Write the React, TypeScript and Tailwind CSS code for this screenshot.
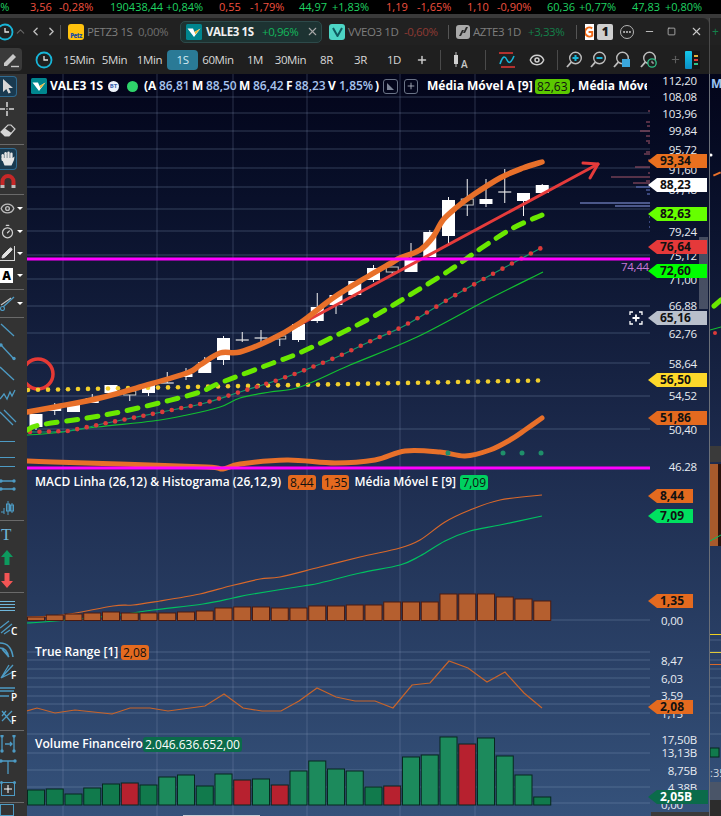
import React from "react";
import { ChevronLeft, ChevronRight, ChevronUp, Ellipsis, Eye, Minus, Pencil, Plus, Square, Timer, X } from "lucide-react";

type P = [number, number];

function smooth(pts: P[]): string {
  let d = `M${pts[0][0]} ${pts[0][1]}`;
  for (let i = 0; i < pts.length - 1; i++) {
    const p0 = pts[Math.max(0, i - 1)];
    const p1 = pts[i];
    const p2 = pts[i + 1];
    const p3 = pts[Math.min(pts.length - 1, i + 2)];
    const c1x = p1[0] + (p2[0] - p0[0]) / 6;
    const c1y = p1[1] + (p2[1] - p0[1]) / 6;
    const c2x = p2[0] - (p3[0] - p1[0]) / 6;
    const c2y = p2[1] - (p3[1] - p1[1]) / 6;
    d += ` C${c1x.toFixed(1)} ${c1y.toFixed(1)} ${c2x.toFixed(1)} ${c2y.toFixed(1)} ${p2[0]} ${p2[1]}`;
  }
  return d;
}

function interp(pts: P[], x: number): number {
  for (let i = 0; i < pts.length - 1; i++) {
    if (x >= pts[i][0] && x <= pts[i + 1][0]) {
      const t = (x - pts[i][0]) / (pts[i + 1][0] - pts[i][0]);
      return pts[i][1] + t * (pts[i + 1][1] - pts[i][1]);
    }
  }
  return pts[pts.length - 1][1];
}

const gridY = [97, 113, 131, 149, 168, 187, 209, 231, 255, 279, 306, 333, 363, 396, 429, 620, 652, 660, 669, 678, 687, 696, 704, 713, 734, 753, 770, 787, 803];
const gridX = [63, 157, 233, 307, 400, 475];

// [index, bodyTop, bodyBottom, wickTop, wickBottom, kind]
type C = [number, number, number, number, number, "w" | "h" | "x"];
const candles: C[] = [
  [0, 414, 427, 414, 430, "w"], [1, 408, 411, 403, 415, "w"], [2, 403, 412, 403, 412, "w"], [3, 398, 403, 394, 403, "w"],
  [4, 385, 393, 385, 397, "w"], [5, 391, 395, 391, 401, "h"], [6, 385, 393, 385, 396, "w"], [7, 383, 383, 372, 383, "x"],
  [8, 374, 377, 368, 380, "w"], [9, 362, 373, 357, 373, "w"], [10, 338, 360, 336, 365, "w"], [11, 340, 340, 332, 342, "x"],
  [12, 338, 338, 330, 342, "x"], [13, 336, 339, 336, 346, "h"], [14, 324, 340, 322, 342, "w"], [15, 307, 321, 293, 323, "w"],
  [16, 295, 305, 295, 314, "w"], [17, 281, 295, 281, 297, "w"], [18, 268, 280, 265, 282, "w"], [19, 267, 272, 267, 275, "h"],
  [20, 258, 272, 243, 272, "w"], [21, 232, 257, 230, 257, "w"], [22, 200, 236, 197, 243, "w"], [23, 199, 205, 179, 216, "h"],
  [24, 199, 204, 179, 207, "w"], [25, 192, 192, 169, 203, "x"], [26, 193, 201, 193, 216, "w"], [27, 185, 193, 184, 193, "w"],
];

const orangeMA: P[] = [[27, 412], [60, 406], [100, 398], [140, 387], [187, 373], [200, 365], [220, 353], [240, 352], [270, 340], [300, 323], [333, 298], [367, 277], [393, 262], [400, 258], [420, 250], [433, 237], [443, 220], [457, 207], [473, 195], [500, 178], [523, 168], [542, 162]];
const limeMA: P[] = [[27, 430], [40, 425], [87, 418], [120, 412], [163, 402], [200, 392], [220, 383], [273, 363], [297, 354], [333, 337], [367, 320], [400, 301], [450, 270], [483, 247], [513, 228], [542, 215]];
const dotMA: P[] = [[27, 432], [68, 431], [107, 423], [157, 413], [205, 403], [243, 391], [272, 382], [300, 372], [337, 357], [373, 340], [400, 328], [418, 318], [452, 297], [487, 277], [513, 263], [541, 248]];
const thinGreen: P[] = [[27, 435], [53, 433], [97, 427], [153, 421], [187, 415], [220, 407], [240, 398], [270, 392], [300, 387], [350, 365], [417, 337], [487, 300], [543, 272]];
const lowOrange: P[] = [[27, 461], [53, 462], [120, 464], [207, 467], [223, 469], [240, 464], [287, 460], [335, 463], [375, 460], [405, 451], [440, 452], [465, 456], [490, 450], [510, 440], [525, 430], [542, 418]];
const macdA: P[] = [[27, 617], [63, 615], [113, 606], [133, 605], [160, 601], [200, 594], [230, 586], [260, 579], [280, 577], [320, 567], [360, 557], [400, 548], [420, 540], [445, 522], [470, 510], [500, 500], [542, 495]];
const macdB: P[] = [[27, 623], [43, 622], [87, 618], [120, 615], [153, 610], [203, 604], [233, 598], [253, 594], [303, 586], [320, 583], [360, 573], [400, 565], [420, 556], [445, 541], [470, 531], [500, 525], [542, 516]];
const trueRange: P[] = [[27, 711], [37, 708], [55, 713], [75, 710], [112, 714], [130, 708], [150, 708], [168, 711], [205, 706], [224, 694], [243, 708], [262, 711], [281, 711], [299, 701], [317, 688], [336, 697], [355, 701], [375, 701], [393, 708], [412, 685], [430, 683], [449, 661], [468, 668], [487, 682], [505, 672], [524, 693], [542, 708]];

const macdTops = [617, 615, 614, 613, 612, 613, 613, 613, 612, 611, 608, 607, 607, 608, 608, 606, 606, 605, 605, 602, 602, 602, 594, 594, 594, 597, 599, 601];
const volTops = [790, 789, 794, 788, 784, 783, 785, 777, 775, 786, 774, 780, 779, 785, 771, 761, 769, 771, 787, 786, 757, 755, 737, 744, 738, 756, 775, 797];
const volRed = new Set([5, 11, 13, 19, 23]);

const profile: [number, number, string][] = [
  [111, 2, "#a5566a"], [122, 4, "#a5566a"], [126, 3, "#a5566a"], [131, 10, "#a5566a"], [136, 4, "#a5566a"], [141, 4, "#a5566a"], [143, 2, "#a5566a"],
  [152, 4, "#a5566a"], [154, 6, "#a5566a"], [160, 2, "#a5566a"], [167, 15, "#a5566a"], [173, 2, "#a5566a"], [177, 39, "#a5566a"], [181, 4, "#a5566a"],
  [183, 17, "#a5566a"], [187, 14, "#6a7fd0"], [190, 4, "#6a7fd0"], [194, 3, "#6a7fd0"], [203, 70, "#8ea0ea"], [206, 35, "#8ea0ea"], [217, 1, "#6a7fd0"], [222, 1, "#6a7fd0"], [227, 1, "#6a7fd0"],
];

const axis: [number, string, number][] = [
  [81, "112,20", 0], [97, "108,08", 0], [114, "103,96", 0], [131, "99,84", 0], [150, "95,72", 0], [170, "91,60", 0], [190, "87,48", 0], [211, "83,36", 0],
  [232, "79,24", 0], [256, "75,12", 0], [280, "71,00", 0], [306, "66,88", 0], [334, "62,76", 0], [364, "58,64", 0], [396, "54,52", 0], [430, "50,40", 0], [467, "46.28", 0],
  [621, "0,00", 14], [661, "8,47", 14], [679, "6,03", 14], [696, "3,59", 14], [714, "1,15", 14],
  [740, "17,50B", 0], [753, "13,13B", 0], [771, "8,75B", 0], [788, "4,38B", 0], [805, "0,00", 14],
];

const tags: [number, string, string, string, number][] = [
  [161, "93,34", "#e8701f", "#111", 59], [185, "88,23", "#ffffff", "#111", 59], [214, "82,63", "#66ff00", "#111", 59], [247, "76,64", "#e5393a", "#111", 59],
  [271, "72,60", "#00ff00", "#111", 59], [318, "65,16", "#b9c0cb", "#111", 59], [380, "56,50", "#fdd82a", "#111", 59], [418, "51,86", "#e46a1f", "#111", 59],
  [496, "8,44", "#e46a1f", "#111", 45], [516, "7,09", "#00e060", "#111", 45], [601, "1,35", "#e46a1f", "#111", 45], [707, "2,08", "#e46a1f", "#111", 45], [797, "2,05B", "#0b6b4a", "#fff", 60],
];

function ValeLogo({ s = 16 }: { s?: number }) {
  return (
    <svg width={s} height={s} viewBox="0 0 16 16" className="flex-none">
      <rect width="16" height="16" rx="1.5" fill="#00868f" />
      <path d="M1.5 4.5 H7 L8.5 8 L14.5 4.5 L8 13 Z" fill="#fff" />
      <path d="M8.5 8 L14.5 4.5 L9.5 10.5 Z" fill="#e8b93a" />
    </svg>
  );
}

function Chart() {
  const dots: number[] = [];
  for (let x = 30; x <= 541; x += 9.45) dots.push(x);
  const yellow: number[] = [];
  for (let x = 28; x <= 538; x += 10) yellow.push(x);
  return (
    <svg viewBox="27 74 682 742" className="absolute inset-0 w-full h-full">
      {gridY.map((y) => <line key={y} x1="27" x2="650" y1={y} y2={y} stroke="#8fa3c4" strokeOpacity="0.33" strokeWidth="1" />)}
      {gridX.map((x) => <line key={x} x1={x} x2={x} y1="74" y2="816" stroke="#8fa3c4" strokeOpacity="0.28" strokeWidth="1" />)}
      {profile.map(([y, w, c]) => <line key={y} x1={650 - w} x2="650" y1={y} y2={y} stroke={c} strokeWidth="1" />)}
      <circle cx="38" cy="374" r="15" fill="none" stroke="#e53935" strokeWidth="3.5" />
      {candles.map(([i, t, b, wt, wb, k]) => {
        const cx = 36 + 18.75 * i;
        return (
          <g key={i}>
            <line x1={cx} x2={cx} y1={wt} y2={wb} stroke="#f4f4f4" strokeWidth="1" />
            {k === "w" && <rect x={cx - 6.5} y={t} width="13" height={b - t} fill="#fff" />}
            {k === "h" && <rect x={cx - 6} y={t} width="12" height={b - t} fill="#10121c" stroke="#c9c9c9" strokeWidth="1" />}
            {k === "x" && <line x1={cx - 6.5} x2={cx + 6.5} y1={t} y2={t} stroke="#e8e8e8" strokeWidth="1.2" />}
          </g>
        );
      })}
      {yellow.map((x) => <circle key={x} cx={x} cy={390 - ((x - 28) / 510) * 9.5} r="2.3" fill="#f2cf2c" />)}
      <path d={smooth(thinGreen)} fill="none" stroke="#12c030" strokeWidth="1.2" />
      <path d={smooth(dotMA)} fill="none" stroke="#119a6a" strokeWidth="1.2" />
      {dots.map((x) => <circle key={x} cx={x} cy={interp(dotMA, x)} r="2.3" fill="#dc3a3a" />)}
      <path d={smooth(limeMA)} fill="none" stroke="#6ae800" strokeWidth="5" strokeLinecap="round" strokeDasharray="11 9.5" />
      <path d={smooth(lowOrange)} fill="none" stroke="#e8702a" strokeWidth="5" strokeLinecap="round" />
      {[448, 503, 522, 541].map((x) => <circle key={x} cx={x} cy="453" r="2.5" fill="#1f8f6a" />)}
      <g stroke="#e53b3b" strokeWidth="3" fill="none" strokeLinecap="round" strokeLinejoin="round">
        <line x1="299" y1="325" x2="598" y2="164" />
        <path d="M583 163 L598 164 L590 178" />
      </g>
      <path d={smooth(orangeMA)} fill="none" stroke="#e8702a" strokeWidth="5.5" strokeLinecap="round" />
      <rect x="27" y="257.5" width="623" height="3" fill="#ff00ff" />
      <rect x="27" y="466.5" width="623" height="3" fill="#ff00ff" />
      <path d={smooth(macdA)} fill="none" stroke="#d8682a" strokeWidth="1.2" />
      <path d={smooth(macdB)} fill="none" stroke="#00c060" strokeWidth="1.2" />
      {macdTops.map((t, i) => (
        <rect key={i} x={27.5 + 18.75 * i} y={t} width="17" height={620.5 - t} fill="#b55f2f" stroke="#4a1a10" strokeWidth="1" />
      ))}
      <path d={trueRange.map((p, i) => `${i ? "L" : "M"}${p[0]} ${p[1]}`).join(" ")} fill="none" stroke="#c8642a" strokeWidth="1.2" />
      {volTops.map((t, i) => (
        <rect
          key={i}
          x={27.5 + 18.75 * i}
          y={t}
          width="17"
          height={805 - t}
          fill={volRed.has(i) ? "#b7212f" : t < 780 ? "#1c8a5c" : "#117a4c"}
          stroke="#07271f"
          strokeWidth="1"
        />
      ))}
      <rect x="183" y="815" width="77" height="1" fill="#c8ccd4" />
      <rect x="651" y="812" width="58" height="4" fill="#3a3a3a" />
    </svg>
  );
}

function Badge({ bg, fg = "#111", children }: { bg: string; fg?: string; children: React.ReactNode }) {
  return (
    <span className="flex-none rounded-[3px] px-[2px] h-[15px] leading-[15px] font-normal" style={{ backgroundColor: bg, color: fg }}>
      {children}
    </span>
  );
}

function Legends() {
  return (
    <>
      <div className="absolute left-[4px] top-[3px] w-[616px] h-[18px] overflow-hidden flex items-center whitespace-nowrap text-[12px] font-semibold text-white">
        <ValeLogo />
        <span className="w-[51px] ml-[3px] flex-none font-bold">VALE3 1S</span>
        <span className="flex-none ml-[7px] w-[11px] h-[11px] rounded-full bg-[#eef3fb] text-[#3a62b0] text-[6px] leading-[11px] text-center font-bold">BT</span>
        <span className="flex-none ml-[8px] w-[11px] h-[11px] rounded-full bg-[#2fd36b]" />
        <span className="flex-none ml-[6px] w-[15px] font-bold">(A</span>
        <span className="flex-none w-[33px] text-[#a8c4ee]">86,81</span>
        <span className="flex-none w-[14px] font-bold">M</span>
        <span className="flex-none w-[33px] text-[#a8c4ee]">88,50</span>
        <span className="flex-none w-[14px] font-bold">M</span>
        <span className="flex-none w-[33px] text-[#a8c4ee]">86,42</span>
        <span className="flex-none w-[9px] font-bold">F</span>
        <span className="flex-none w-[33px] text-[#a8c4ee]">88,23</span>
        <span className="flex-none w-[11px] font-bold">V</span>
        <span className="flex-none w-[36px] text-[#a8c4ee]">1,85%</span>
        <span className="flex-none w-[8px] font-bold">)</span>
        <span className="flex-none w-[15px] h-[15px] rounded-[3px] border border-[#6a7386] flex items-center justify-center">
          <svg width="9" height="9" viewBox="0 0 9 9"><path d="M1 1 V8 H8 Z" fill="#7c8496" /></svg>
        </span>
        <span className="flex-none ml-[6px] w-[14px] h-[15px] rounded-[3px] border border-[#6a7386] flex items-center justify-center">
          <Plus size={10} color="#b7bdc9" />
        </span>
        <span className="flex-none ml-[9px] w-[108px] font-bold">Média Móvel A [9]</span>
        <Badge bg="#5bc800">82,63</Badge>
        <span className="flex-none ml-[2px] font-bold">, Média Móvel E [9]</span>
      </div>
      <div className="absolute left-[8px] top-[400px] h-[16px] flex items-center whitespace-nowrap text-[12px] font-semibold text-white">
        <span className="w-[253px] flex-none">MACD Linha (26,12) &amp; Histograma (26,12,9)</span>
        <Badge bg="#e46a1f">8,44</Badge>
        <span className="ml-[6px] flex-none flex"><Badge bg="#e46a1f">1,35</Badge></span>
        <span className="ml-[5px] w-[106px] flex-none">Média Móvel E [9]</span>
        <Badge bg="#00d060">7,09</Badge>
      </div>
      <div className="absolute left-[8px] top-[570px] h-[16px] flex items-center whitespace-nowrap text-[12px] font-semibold text-white">
        <span className="w-[86px] flex-none">True Range [1]</span>
        <Badge bg="#e46a1f">2,08</Badge>
      </div>
      <div className="absolute left-[8px] top-[662px] h-[16px] flex items-center whitespace-nowrap text-[12px] font-semibold text-white">
        <span className="w-[108px] flex-none">Volume Financeiro</span>
        <Badge bg="#0b6b4a" fg="#fff">2.046.636.652,00</Badge>
      </div>
    </>
  );
}

function PriceAxis() {
  return (
    <>
      {axis.map(([y, t, r]) => (
        <span
          key={y}
          className="absolute w-[50px] text-right text-[11.5px] tracking-[-0.2px] leading-[14px] text-[#e8ecf2]"
          style={{ top: y - 81, left: 620 - r }}
        >
          {t}
        </span>
      ))}
      <span className="absolute left-[594px] top-[186px] text-[11.5px] tracking-[-0.3px] leading-[14px] text-[#c878d8]">74,44</span>
      <div className="absolute left-[672px] top-[163px] w-[9px] h-[72px] bg-[#9aa0a8]/40 flex items-center justify-center text-[#e0e0e0] text-[11px]">‹</div>
      {tags.map(([y, t, bg, fg, w]) => (
        <span
          key={t}
          className="absolute left-[621px] h-[14px] pl-[12px] text-[12px] leading-[14px] font-bold [clip-path:polygon(9px_0,100%_0,100%_100%,9px_100%,0_50%)]"
          style={{ top: y - 81, width: w, backgroundColor: bg, color: fg }}
        >
          {t}
        </span>
      ))}
      <div className="absolute left-[602px] top-[237px] w-[14px] h-[14px] flex items-center justify-center">
        <svg width="14" height="14" viewBox="0 0 14 14" fill="none" stroke="#fff" strokeWidth="1.3">
          <path d="M1 4 V1 H4 M10 1 H13 V4 M13 10 V13 H10 M4 13 H1 V10" />
          <path d="M7 3.5 V10.5 M3.5 7 H10.5" strokeWidth="1.8" />
        </svg>
      </div>
    </>
  );
}

function Caret() {
  return <span className="flex-none ml-[2px] w-0 h-0 border-l-[3px] border-r-[3px] border-t-[3px] border-l-transparent border-r-transparent border-t-white" />;
}

function Divider({ h }: { h: string }) {
  return (
    <div className={`flex items-center flex-none ${h}`}>
      <div className="w-[24px] h-px bg-[#6a6a6a]" />
    </div>
  );
}

const B = "#4d9bc4";

function Line({ pts, dots }: { pts: string; dots?: [number, number][] }) {
  return (
    <svg width="18" height="18" viewBox="0 0 18 18" fill="none" stroke={B} strokeWidth="1.3" className="flex-none">
      <path d={pts} />
      {dots && dots.map((d, i) => <circle key={i} cx={d[0]} cy={d[1]} r="1.7" fill={B} stroke="none" />)}
    </svg>
  );
}

function Row({ h, children }: { h: string; children: React.ReactNode }) {
  return <div className={`flex items-center flex-none ${h}`}>{children}</div>;
}

function Letter({ c }: { c: string }) {
  return <span className="flex-none -ml-[7px] text-[10px] leading-[10px] mt-[6px] text-white font-semibold">{c}</span>;
}

function LeftTools() {
  return (
    <div className="w-[27px] flex-none bg-[#333333] flex flex-col overflow-hidden">
      <Row h="h-[24px]">
        <div className="w-[17px] h-[21px] rounded-r-[4px] bg-[#1a3a50] border border-l-0 border-[#2f6a90] flex items-center justify-center">
          <svg width="12" height="15" viewBox="0 0 12 15"><path d="M1 0 V13 L4.3 10 L6.5 14.5 L8.8 13.5 L6.5 9 H11 Z" fill="#d7d7d7" /></svg>
        </div>
      </Row>
      <Row h="h-[22px]">
        <svg width="18" height="18" viewBox="0 0 18 18" fill="none" stroke="#d9d9d9" strokeWidth="1.5" className="flex-none -ml-[2px]">
          <path d="M9 2 V7 M9 11 V16 M2 9 H7 M11 9 H16" />
          <circle cx="9" cy="9" r="0.8" fill="#d9d9d9" stroke="none" />
        </svg>
      </Row>
      <Row h="h-[22px]">
        <svg width="16" height="14" viewBox="0 0 16 14" className="flex-none">
          <path d="M1 8 L8 1 H11 L15 5 L9 12 H5 Z" fill="none" stroke="#cfcfcf" strokeWidth="1.2" />
          <path d="M1 8 L5 12 H9 L11.5 9 L5 4.5 Z" fill="#d6d6d6" />
        </svg>
      </Row>
      <Divider h="h-[5px]" />
      <Row h="h-[23px]">
        <div className="w-[17px] h-[22px] rounded-r-[4px] bg-[#1a3a50] border border-l-0 border-[#2f6a90] flex items-center justify-center">
          <svg width="14" height="15" viewBox="0 0 14 15" fill="#e6e6e6">
            <rect x="0.5" y="3" width="2.4" height="7" rx="1.2" />
            <rect x="3.4" y="1" width="2.4" height="8" rx="1.2" />
            <rect x="6.3" y="0.5" width="2.4" height="8" rx="1.2" />
            <rect x="9.2" y="1.5" width="2.4" height="7" rx="1.2" />
            <path d="M0.5 7 H11.6 L13.5 5.5 L13 9 L10.5 14.5 H3.5 Z" />
          </svg>
        </div>
      </Row>
      <Row h="h-[22px]">
        <svg width="16" height="15" viewBox="0 0 16 15" fill="none" className="flex-none">
          <path d="M2.5 11 V7.5 A5.5 5.5 0 0 1 13.5 7.5 V11" stroke="#c62828" strokeWidth="4" />
          <path d="M2.5 11 V14 M13.5 11 V14" stroke="#bdbdbd" strokeWidth="4" />
        </svg>
      </Row>
      <Divider h="h-[4px]" />
      <Row h="h-[24px]">
        <Eye size={15} color="#bdbdbd" strokeWidth={2.2} className="flex-none" />
        <Caret />
      </Row>
      <Row h="h-[22px]">
        <Timer size={15} color="#d0d0d0" strokeWidth={2} className="flex-none" />
        <Caret />
      </Row>
      <Row h="h-[22px]">
        <div className="flex-none w-[15px] h-[15px] border-b border-r border-[#d6d6d6] flex items-center justify-center">
          <Pencil size={12} color="#e2e2e2" fill="#e2e2e2" />
        </div>
        <Caret />
      </Row>
      <Row h="h-[23px]">
        <div className="flex-none w-[13px] h-[15px] bg-white text-black text-[12px] leading-[15px] font-extrabold text-center">A</div>
        <span className="ml-[2px] flex"><Caret /></span>
      </Row>
      <Divider h="h-[4px]" />
      <Row h="h-[24px]">
        <svg width="15" height="15" viewBox="0 0 15 15" fill="none" className="flex-none">
          <path d="M14 1 L3 11" stroke={B} strokeWidth="1.3" />
          <path d="M11 2 L1 9" stroke="#c7c7c7" strokeWidth="1.1" />
          <circle cx="2.5" cy="12.5" r="2" stroke={B} strokeWidth="1.1" />
        </svg>
        <Caret />
      </Row>
      <Divider h="h-[4px]" />
      <Row h="h-[22px]"><Line pts="M1 3 L14 15" /></Row>
      <Row h="h-[21px]"><Line pts="M1 2 L14 16" dots={[[1, 2], [14, 15.5]]} /></Row>
      <Row h="h-[22px]"><Line pts="M0 3 L14 16" /></Row>
      <Row h="h-[22px]"><Line pts="M0 13 L4 8 L7 13 L10 6 L12 10 L15 4" /></Row>
      <Row h="h-[24px]"><Line pts="M0 3 L13 16 M4 1 L16 13" /></Row>
      <Row h="h-[22px]"><div className="w-[15px] h-px bg-[#4d9bc4]" /></Row>
      <Row h="h-[20px]">
        <div className="flex flex-col gap-[8px]">
          <div className="w-[15px] h-px bg-[#4d9bc4]" />
          <div className="w-[15px] h-px bg-[#4d9bc4]" />
        </div>
      </Row>
      <Row h="h-[25px]"><Line pts="M0 5 H15 M0 13 H15" dots={[[1, 5], [14, 5], [1, 13], [14, 13]]} /></Row>
      <Row h="h-[21px]">
        <svg width="16" height="16" viewBox="0 0 16 16" fill="none" stroke={B} className="flex-none">
          <path d="M1 12 H4 M4 8 V14 M8 1 V15 M12 3 V13" />
          <rect x="6.5" y="4" width="3" height="7" />
          <rect x="10.5" y="5" width="3" height="6" />
        </svg>
      </Row>
      <Divider h="h-[4px]" />
      <Row h="h-[24px]"><span className="flex-none ml-[1px] text-[17px] leading-[17px] text-[#6fb6da] font-['Liberation_Serif',serif]">T</span></Row>
      <Row h="h-[23px]">
        <svg width="12" height="15" viewBox="0 0 12 15" className="flex-none ml-[1px]"><path d="M6 0 L12 7 H8.5 V15 H3.5 V7 H0 Z" fill="#0d9a5e" /></svg>
      </Row>
      <Row h="h-[22px]">
        <svg width="12" height="15" viewBox="0 0 12 15" className="flex-none ml-[1px]"><path d="M6 15 L12 8 H8.5 V0 H3.5 V8 H0 Z" fill="#f25555" /></svg>
      </Row>
      <Divider h="h-[3px]" />
      <Row h="h-[23px]">
        <div className="flex flex-col gap-[2px]">
          <div className="w-[15px] h-px bg-[#6fb6da]" />
          <div className="w-[15px] h-px bg-[#6fb6da]" />
          <div className="w-[15px] h-px bg-[#6fb6da]" />
          <div className="w-[15px] h-px bg-[#6fb6da]" />
        </div>
      </Row>
      <Row h="h-[21px]"><Line pts="M0 9 L9 2 M1 14 L12 5 M4 15 L10 11" /><Letter c="C" /></Row>
      <Row h="h-[23px]">
        <svg width="16" height="16" viewBox="0 0 16 16" fill="none" stroke={B} strokeWidth="1.6" className="flex-none -ml-[1px]">
          <path d="M1 1 Q12 1 14 15 M1 6 Q8 6 9.5 15 M10 15 L3 7" />
        </svg>
      </Row>
      <Row h="h-[22px]"><Line pts="M1 15 L13 2 M1 15 L9 2 M1 15 L15 8" /><Letter c="F" /></Row>
      <Row h="h-[22px]"><Line pts="M0 3 H15 M0 6 H14 M0 11 H9" /><Letter c="P" /></Row>
      <Row h="h-[23px]"><Line pts="M2 3 L11 14 M2 13 L12 3 M6 3 L2 8" /><Letter c="F" /></Row>
      <Divider h="h-[4px]" />
      <Row h="h-[24px]"><Line pts="M2 1 V16 M14 1 V16 M5 9 H12 M10 7 L12 9 L10 11" dots={[[2, 1], [2, 16], [14, 1], [14, 16]]} /></Row>
      <Row h="h-[21px]"><Line pts="M1 3 H15 M8 3 V16" dots={[[1, 3], [15, 3]]} /></Row>
      <Row h="h-[23px]">
        <svg width="17" height="17" viewBox="0 0 17 17" fill="none" stroke={B} className="flex-none">
          <rect x="1.5" y="2.5" width="13" height="13" />
          <path d="M8 5 V13 M4 9 H12" stroke="#fff" />
          <circle cx="1.5" cy="2.5" r="1.5" fill={B} stroke="none" />
          <circle cx="14.5" cy="2.5" r="1.5" fill={B} stroke="none" />
        </svg>
      </Row>
      <Divider h="h-[4px]" />
      <Row h="h-[12px]"><div className="w-[14px] h-[12px] border border-[#4d9bc4]" /></Row>
    </div>
  );
}

function Ticker() {
  const g = "text-[#1fd262]";
  const r = "text-[#f0503f]";
  return (
    <div className="h-[14px] flex-none bg-black flex items-center overflow-hidden whitespace-nowrap text-[11px] leading-[14px]">
      <span className={`flex-none w-[13px] -ml-[6px] ${g}`}>1%</span>
      <span className={`flex-none ml-[23px] w-[29px] ${r}`}>3,56</span>
      <span className={`flex-none w-[51px] ${r}`}>-0,28%</span>
      <span className={`flex-none w-[56px] ${g}`}>190438,44</span>
      <span className={`flex-none w-[53px] ${g}`}>+0,84%</span>
      <span className={`flex-none w-[31px] ${r}`}>0,55</span>
      <span className={`flex-none w-[49px] ${r}`}>-1,79%</span>
      <span className={`flex-none w-[33px] ${g}`}>44,97</span>
      <span className={`flex-none w-[54px] ${g}`}>+1,83%</span>
      <span className={`flex-none w-[31px] ${r}`}>1,19</span>
      <span className={`flex-none w-[50px] ${r}`}>-1,65%</span>
      <span className={`flex-none w-[30px] ${r}`}>1,10</span>
      <span className={`flex-none w-[50px] ${r}`}>-0,90%</span>
      <span className={`flex-none w-[32px] ${g}`}>60,36</span>
      <span className={`flex-none w-[53px] ${g}`}>+0,77%</span>
      <span className={`flex-none w-[33px] ${g}`}>47,83</span>
      <span className={`flex-none w-[37px] ${g}`}>+0,80%</span>
    </div>
  );
}

function Tabs() {
  return (
    <div className="h-[27px] flex-none flex bg-[#3a3a3a]">
      <div className="w-[709px] flex-none bg-[#212121] flex items-center rounded-tr-[6px] whitespace-nowrap text-[11.5px] tracking-[-0.4px]">
        <div className="flex-none w-[14px] h-[18px] overflow-hidden">
          <svg width="14" height="18" viewBox="0 0 14 18" fill="none">
            <circle cx="5" cy="9" r="7.5" stroke="#18b5d8" strokeWidth="1.8" />
            <path d="M5 5 V9 H9" stroke="#e6e6e6" strokeWidth="1.3" />
          </svg>
        </div>
        <ChevronUp size={13} color="#666" className="flex-none" />
        <ChevronLeft size={13} color="#bcbcbc" strokeWidth={2.6} className="flex-none ml-[2px]" />
        <ChevronRight size={13} color="#bcbcbc" strokeWidth={2.6} className="flex-none ml-[3px]" />
        <div className="flex-none ml-[2px] w-px h-[14px] bg-[#555]" />
        <div className="flex-none ml-[7px] w-[16px] h-[16px] rounded-[3px] bg-[#ffc20e] flex items-end justify-center overflow-hidden">
          <span className="text-[6px] leading-[8px] font-extrabold text-[#1e4fa0]">Petz</span>
        </div>
        <span className="flex-none ml-[3px] w-[51px] text-[#7e7e7e]">PETZ3 1S</span>
        <span className="flex-none w-[42px] text-[#6f6f6f]">0,00%</span>
        <div className="flex-none w-[142px] h-[22px] rounded-[5px] bg-[#1d3332] border border-[#2d4a4a] flex items-center">
          <span className="ml-[5px] flex"><ValeLogo /></span>
          <span className="flex-none ml-[4px] w-[56px] text-[#f0f0f0] font-bold">VALE3 1S</span>
          <span className="flex-none w-[44px] text-[#14b85c]">+0,96%</span>
          <X size={13} color="#a8a8a8" strokeWidth={2} className="flex-none" />
        </div>
        <div className="flex-none ml-[7px] w-[16px] h-[16px] rounded-[3px] bg-[#4dd5c5] flex items-center justify-center">
          <svg width="11" height="10" viewBox="0 0 11 10" fill="none"><path d="M1 1 L5.5 9 L10 1" stroke="#0e5c60" strokeWidth="2" /></svg>
        </div>
        <span className="flex-none ml-[3px] w-[56px] text-[#7e7e7e]">VVEO3 1D</span>
        <span className="flex-none w-[44px] text-[#8e3a33]">-0,60%</span>
        <div className="flex-none w-px h-[14px] bg-[#555]" />
        <div className="flex-none ml-[7px] w-[14px] h-[14px] rounded-[3px] bg-[#a9a9a9] flex items-center justify-center">
          <svg width="11" height="9" viewBox="0 0 11 9" fill="#2a2a2a"><path d="M1 9 L4 3 L6 3 L3 9 Z M5 6 L8 0 L10 0 L7 6 Z" /></svg>
        </div>
        <span className="flex-none ml-[3px] w-[55px] text-[#7e7e7e]">AZTE3 1D</span>
        <span className="flex-none w-[46px] text-[#14804a]">+3,33%</span>
        <div className="flex-none ml-[2px] w-px h-[14px] bg-[#555]" />
        <div className="flex-none ml-[8px] w-[9px] h-[16px] bg-white flex items-center justify-center overflow-hidden">
          <svg width="10" height="12" viewBox="0 0 10 12" fill="none"><path d="M8 2 A5 5 0 1 0 8 10 V6 H4" stroke="#ef6a1a" strokeWidth="2.2" /></svg>
        </div>
        <div className="flex-none ml-[3px] w-[16px] h-[16px] rounded-[2px] bg-[#cfcfcf] text-[#1a1a1a] text-[12px] leading-[16px] font-extrabold text-center">1</div>
        <div className="flex-none ml-[7px] w-[14px] h-[14px] rounded-full border border-[#b5b5b5] flex items-center justify-center">
          <Ellipsis size={10} color="#c8c8c8" strokeWidth={3} />
        </div>
        <Minus size={11} color="#c8c8c8" className="flex-none ml-[10px]" />
        <Square size={9} color="#c8c8c8" className="flex-none ml-[12px]" />
        <X size={13} color="#c8c8c8" className="flex-none ml-[14px]" />
      </div>
      <div className="flex-1 bg-[#212121] border-l border-[#4a4a4a] text-[#14804a] text-[12px] leading-[27px] pl-[2px]">+</div>
    </div>
  );
}

function TimeBtn({ w, label, on }: { w: string; label: string; on?: boolean }) {
  return (
    <span className={`flex-none ${w} h-[20px] rounded-[4px] text-center text-[11.5px] tracking-[-0.4px] leading-[20px] ${on ? "bg-[#2a7a96] text-[#d4eaf2]" : "text-[#d8d8d8]"}`}>
      {label}
    </span>
  );
}

function Magnifier({ children }: { children: React.ReactNode }) {
  return (
    <svg width="17" height="17" viewBox="0 0 17 17" fill="none" className="flex-none">
      <circle cx="9.5" cy="7" r="5.8" stroke="#bdbdbd" strokeWidth="1.4" />
      <path d="M5.3 11.2 L1 16" stroke="#bdbdbd" strokeWidth="1.8" />
      {children}
    </svg>
  );
}

function Toolbar() {
  return (
    <div className="h-[29px] flex-none flex bg-[#1f1f1f]">
      <div className="w-[709px] flex-none flex items-center">
        <div className="flex-none w-[22px] h-[23px] rounded-r-[4px] bg-[#3a3a3a] flex items-center justify-center">
          <svg width="16" height="16" viewBox="0 0 16 16" fill="none">
            <path d="M1 11 L10 2 L13 5 L4 14 L1 14 Z" fill="#c9c9c9" />
            <path d="M8 14.5 H16" stroke="#c9c9c9" strokeWidth="1.4" />
          </svg>
        </div>
        <svg width="18" height="18" viewBox="0 0 18 18" fill="none" className="flex-none ml-[13px]">
          <circle cx="9" cy="9" r="7.5" stroke="#18b5d8" strokeWidth="1.8" />
          <path d="M9 5 V9 H13" stroke="#e6e6e6" strokeWidth="1.3" />
        </svg>
        <span className="flex-none w-[8px]" />
        <TimeBtn w="w-[36px]" label="15Min" />
        <TimeBtn w="w-[35px]" label="5Min" />
        <TimeBtn w="w-[35px]" label="1Min" />
        <TimeBtn w="w-[31px]" label="1S" on />
        <TimeBtn w="w-[40px]" label="60Min" />
        <TimeBtn w="w-[34px]" label="1M" />
        <TimeBtn w="w-[37px]" label="30Min" />
        <TimeBtn w="w-[35px]" label="8R" />
        <TimeBtn w="w-[33px]" label="3R" />
        <TimeBtn w="w-[34px]" label="1D" />
        <span className="flex-none w-[22px] flex justify-center"><Plus size={12} color="#c8c8c8" strokeWidth={3} /></span>
        <div className="flex-none ml-[7px] w-px h-[20px] bg-[#4a4a4a]" />
        <svg width="14" height="20" viewBox="0 0 14 20" className="flex-none ml-[11px]" fill="none">
          <path d="M4 2 V17" stroke="#bdbdbd" strokeWidth="1" />
          <rect x="2" y="5" width="4" height="9" fill="#d0d0d0" />
        </svg>
        <span className="flex-none -ml-[5px] w-[11px] mt-[8px] text-[10px] leading-[10px] font-semibold text-[#c8c8c8]">A</span>
        <div className="flex-none ml-[13px] w-px h-[20px] bg-[#4a4a4a]" />
        <svg width="16" height="18" viewBox="0 0 16 18" fill="none" className="flex-none ml-[13px]">
          <path d="M0 2 H14 M2 16 H16" stroke="#e53935" strokeWidth="1.6" />
          <path d="M1 13 C4 4 6 5 8 9 C10 13 12 12 15 5" stroke="#18b5d8" strokeWidth="1.6" />
        </svg>
        <Eye size={16} color="#cfcfcf" strokeWidth={2.2} className="flex-none ml-[14px]" />
        <div className="flex-none ml-[12px] w-px h-[20px] bg-[#4a4a4a]" />
        <span className="flex-none ml-[8px] flex"><Magnifier><path d="M6.5 7 H12.5 M9.5 4 V10" stroke="#18b5d8" strokeWidth="2" /></Magnifier></span>
        <span className="flex-none ml-[7px] flex"><Magnifier><path d="M6.5 7 H12.5" stroke="#18b5d8" strokeWidth="2" /></Magnifier></span>
        <span className="flex-none ml-[6px] flex"><Magnifier><rect x="9" y="8" width="8" height="8" fill="#3aa6dc" /></Magnifier></span>
        <span className="flex-none ml-[10px] flex"><Magnifier><circle cx="12" cy="12" r="4.2" fill="#1f1f1f" stroke="#2fc28a" strokeWidth="1.3" /><path d="M12 9.8 V12 H14" stroke="#d0d0d0" strokeWidth="0.9" /></Magnifier></span>
        <Plus size={11} color="#5e5e5e" strokeWidth={2.4} className="flex-none ml-[13px]" />
        <div className="flex-none ml-[4px] flex h-[18px]">
          <div className="w-[7px] bg-linear-to-b from-[#15c8ea] to-[#0c8ec6] rounded-[1px]" />
          <div className="w-[8px] bg-[#161616] flex flex-col items-center justify-center gap-[2px]">
            <div className="w-[4px] h-[2px] bg-[#e2b33a]" />
            <div className="w-[4px] h-[2px] bg-[#e53935]" />
            <div className="w-[4px] h-[2px] bg-[#2fc28a]" />
          </div>
        </div>
      </div>
      <div className="flex-1 border-l border-[#4a4a4a]" />
    </div>
  );
}

export default function App() {
  return (
    <div className="w-[721px] h-[816px] flex flex-col overflow-hidden bg-black font-['Open_Sans',sans-serif]">
      <Ticker />
      <div className="h-[4px] flex-none bg-[#3a3a3a]" />
      <Tabs />
      <Toolbar />
      <div className="flex-1 flex min-h-0">
        <LeftTools />
        <div className="relative w-[682px] flex-none overflow-hidden bg-linear-to-b from-[#03051a] via-[#1c2a4c] to-[#35527b]">
          <Chart />
          <Legends />
          <PriceAxis />
        </div>
        <div className="relative flex-1 overflow-hidden border-l border-[#6a6f78] bg-linear-to-b from-[#03051a] via-[#1c2a4c] to-[#35527b]">
          <svg viewBox="710 74 11 742" className="absolute inset-0 w-full h-full">
            <rect x="713" y="173" width="8" height="2" fill="#e8702a" transform="rotate(-25 717 174)" />
            <circle cx="711" cy="155" r="1.5" fill="#fff" />
            <path d="M714 306 L721 300" stroke="#6ae800" strokeWidth="5" strokeLinecap="round" />
            <path d="M710 330 L721 327" stroke="#12c030" strokeWidth="1.2" />
            <circle cx="715" cy="333" r="2" fill="#dc3a3a" />
            <rect x="710" y="446" width="11" height="16" fill="#3a3a3a" />
            <rect x="710" y="464" width="8" height="82" fill="#a85a2c" />
            <rect x="718" y="464" width="3" height="82" fill="#2a120c" />
            <path d="M710 541 L721 535" stroke="#00c060" strokeWidth="1" />
            <path d="M710 634.5 H721 M710 652.5 H721" stroke="#f0d020" strokeWidth="1" />
            <path d="M710 664.5 H721" stroke="#d8682a" strokeWidth="1" />
            <rect x="710" y="748" width="9" height="9" fill="#117a4c" stroke="#07271f" />
            <rect x="710" y="782" width="11" height="18" fill="#4a5568" />
            <rect x="710" y="800" width="11" height="16" fill="#2c2c2c" />
            {[640, 652, 660, 669, 678, 687, 696, 704, 713, 734].map((y) => <line key={y} x1="710" x2="721" y1={y} y2={y} stroke="#8fa3c4" strokeOpacity="0.33" />)}
          </svg>
          <span className="absolute left-[1px] top-[2px] text-[12px] leading-[16px] font-bold text-[#9cc4f2]">M</span>
          <span className="absolute left-0 top-[692px] text-[11px] leading-[14px] text-[#cfd5df]">:35</span>
        </div>
      </div>
    </div>
  );
}
